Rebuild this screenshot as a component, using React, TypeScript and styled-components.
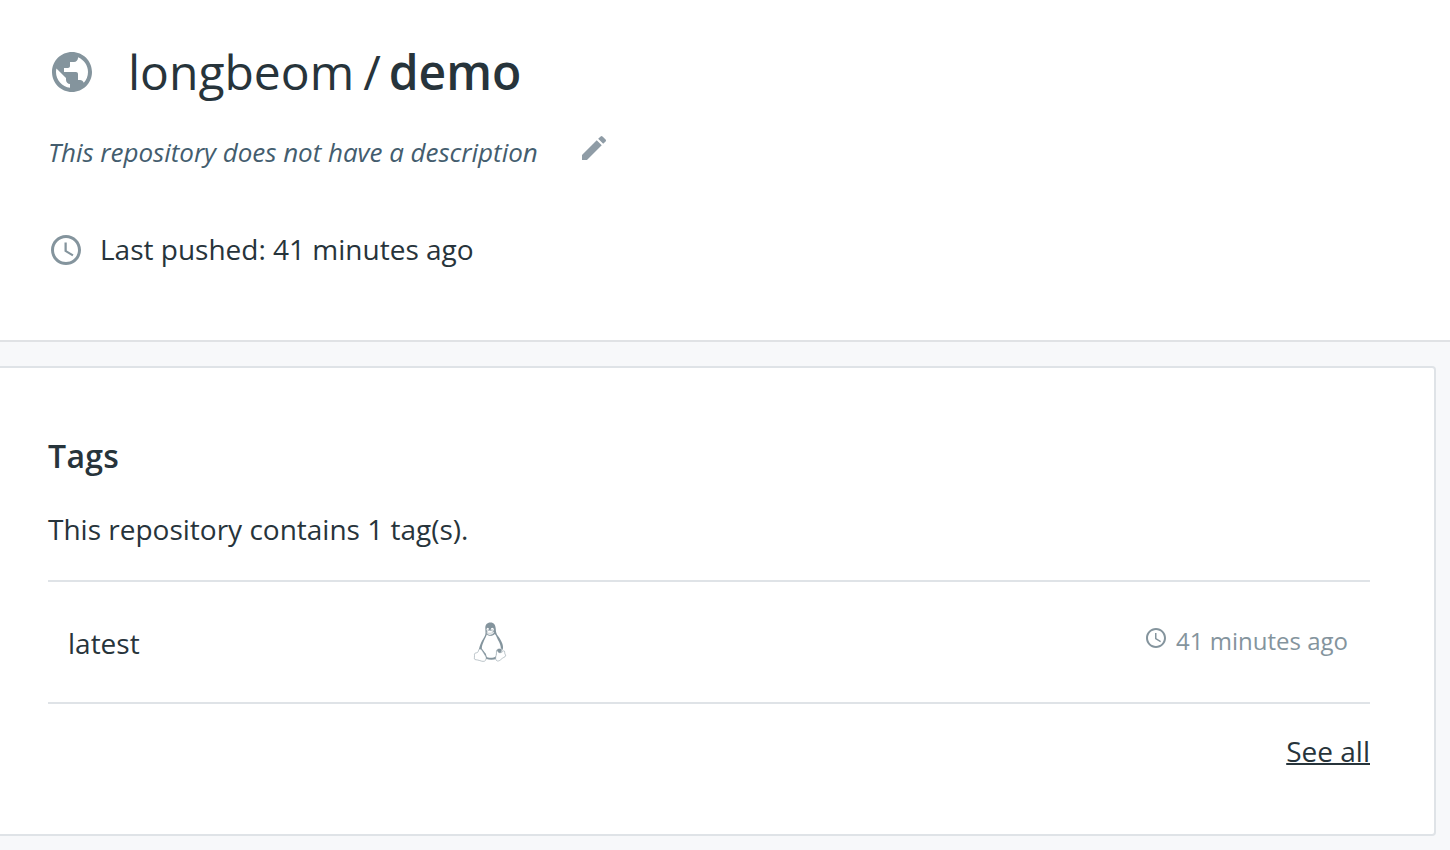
import React from "react";
import styled, { createGlobalStyle } from "styled-components";
import { MdPublic, MdEdit, MdAccessTime } from "react-icons/md";

const Global = createGlobalStyle`
  *{box-sizing:border-box}
  body{margin:0;background:#f7f8fa;font-family:"Open Sans",sans-serif;color:#27343b;overflow:hidden}
  h1,h2,p{margin:0}
`;
const Page = styled.div`
  height: 850px;
  overflow: hidden;
`;
const Header = styled.header`
  height: 342px;
  padding: 36px 48px 0;
  background: #fff;
  border-bottom: 2px solid #e0e2e5;
`;
const TitleRow = styled.div`
  display: flex;
  align-items: center;
  height: 72px;
  color: #84949d;
`;
const Title = styled.h1`
  margin-left: 32px;
  font-size: 48px;
  font-weight: 400;
  line-height: 72px;
  white-space: pre;
  color: #27343b;

  b { font-weight: 600; }
`;
const Slash = styled.span`
  margin: 0 8px 0 9px;
`;
const DescriptionRow = styled.div`
  display: flex;
  height: 40px;
  margin-top: 24px;
  color: #8f9ca6;
`;
const Description = styled.p`
  width: 490px;
  margin-right: 40px;
  font-size: 26px;
  font-style: italic;
  line-height: 40px;
  letter-spacing: -0.035px;
  white-space: nowrap;
  color: #445d6e;
`;
const Pushed = styled.div`
  display: flex;
  align-items: center;
  height: 40px;
  margin-top: 58px;
  color: #84949d;
`;
const PushedText = styled.span`
  margin: 0 0 2px 16px;
  font-size: 28px;
  line-height: 40px;
  color: #27343b;
`;
const Card = styled.section`
  width: 1436px;
  height: 470px;
  margin-top: 24px;
  padding: 68px 64px 0 48px;
  background: #fff;
  border: 2px solid #dfe3e7;
  border-left: 0;
  border-radius: 0 4px 4px 0;
`;
const Heading = styled.h2`
  font-size: 32px;
  font-weight: 600;
  line-height: 40px;
  letter-spacing: 0.3px;
`;
const Summary = styled.p`
  margin-top: 33px;
  font-size: 28px;
  line-height: 40px;
`;
const TagRow = styled.div`
  display: flex;
  align-items: center;
  height: 124px;
  margin-top: 31px;
  padding: 0 22px 0 20px;
  border: solid #dfe3e7;
  border-width: 2px 0;
  color: #84949d;
`;
const TagLabel = styled.span`
  width: 402px;
  padding-top: 2px;
  font-size: 28px;
  color: #27343b;
`;
const PenguinSvg = styled.svg`
  width: 40px;
  height: 40px;
`;
const Age = styled.span`
  display: flex;
  align-items: flex-start;
  gap: 8px;
  height: 40px;
  margin-left: auto;
  font-size: 24px;
  line-height: 38px;

  svg { margin-top: 4px; }
`;
const Footer = styled.div`
  display: flex;
  justify-content: flex-end;
  margin-top: 27px;
`;
const SeeAll = styled.a`
  font-size: 28px;
  line-height: 40px;
  text-decoration: underline;
  text-decoration-thickness: 2px;
`;

function Penguin() {
  return (
    <PenguinSvg viewBox="0 0 40 40" fill="none">
      {/* head, back and flippers */}
      <path fill="currentColor" d="M20.4.4c-3.4 0-5.2 2.3-5.1 5.6l.2 4.8c.1 2.2-.9 3.8-2.4 6.1-1.8 2.8-2.7 5.3-3.6 8-.8 2.5-.9 4.7.3 5.8L16 36.8c3.2 1.2 7.6 1.2 10.8-.1l5-7.3c1.5-1.7 1.6-4.6.6-7.6-1-3.1-2.6-5.6-4.4-7.9-1.7-2.2-2.1-3.8-2.2-6.7C25.6 3 24.1.4 20.4.4z" />
      {/* belly */}
      <path fill="#fff" d="M16.8 12.4c-.5 2.1-2.1 4.4-3 6.8-.8 2.3-2.2 4.6-2 7.4 1.3 2.5 4.5 4.8 4.6 7.1.1 1 .6 1.5 1.6 1.8 2.8.7 5.9.3 8-1.2l.8-6.5c1-1.4 2.6-1.5 4-1 .2-3.1-1.2-6.3-2.8-8.9-1.2-2-1.6-4.3-3.2-5.9-1.5 1.3-4.4 3.2-8 .4z" />
      {/* face */}
      <ellipse cx="17.8" cy="7.5" rx="1.2" ry="1.7" fill="#fff" />
      <ellipse cx="22.3" cy="7.5" rx="1.5" ry="1.8" fill="#fff" />
      <circle cx="18.1" cy="7.8" r=".5" fill="currentColor" />
      <circle cx="22" cy="7.8" r=".6" fill="currentColor" />
      <path fill="#fff" stroke="currentColor" strokeWidth=".5" d="M16.5 10c1-1.1 2-1.7 3.2-1.7 1.4 0 3 .8 4.3 1.5.5 1-.2 1.9-1.2 2.2-1.2.6-2 1.2-3.2 1.1-1.7-.2-3.6-1.9-3.1-3.1z" />
      <path stroke="currentColor" strokeWidth=".45" d="M16.7 10.3c2.2 1.7 4.6 1 6.8-.1" />
      {/* feet */}
      <path fill="#fff" stroke="currentColor" strokeWidth=".55" strokeLinejoin="round" d="M10 26.8c1.2.1 2.3 2 3.2 3.5l2.4 3.8c1.1 1.7.7 4.2-1 5-2.1.9-4.3-.6-6.9-1.1-1.6-.3-3-.2-3.3-1.1-.3-1 .3-2 .1-3.4-.2-1.1-.1-2.1.9-2.4 1.6-.5 2.2-.4 2.7-1.4.5-1.1.5-2.7 1.9-2.9z" />
      <path fill="#fff" stroke="currentColor" strokeWidth=".55" strokeLinejoin="round" d="M27.1 28.2c.7 1.9 2.1 3 4 2.4 1.2-.4 1.8-1.7 2.7-1.8 1-.1.8 1.6 1 2.6.2 1.3 1.1 1.7.9 2.5-.3 1.1-3 1.7-4.7 3.5-1.5 1.6-3.9 2.4-5 .5-1-1.8.3-4.3.4-6.4.1-1.2-.2-3.1.7-3.3z" />
      <path stroke="#fff" strokeWidth=".6" d="M27.4 27.2c.9-1.3 2.7-1.5 3.8-.6 1.1.8.9 2.2.2 3" />
    </PenguinSvg>
  );
}

export default function App() {
  return (
    <Page>
      <Global />
      <Header>
        <TitleRow>
          <MdPublic size={48} />
          <Title>longbeom<Slash>/</Slash><b>demo</b></Title>
        </TitleRow>
        <DescriptionRow>
          <Description>This repository does not have a description</Description>
          <MdEdit size={32} />
        </DescriptionRow>
        <Pushed>
          <MdAccessTime size={36} />
          <PushedText>Last pushed: 41 minutes ago</PushedText>
        </Pushed>
      </Header>
      <Card>
        <Heading>Tags</Heading>
        <Summary>This repository contains 1 tag(s).</Summary>
        <TagRow>
          <TagLabel>latest</TagLabel>
          <Penguin />
          <Age><MdAccessTime size={24} />41 minutes ago</Age>
        </TagRow>
        <Footer><SeeAll>See all</SeeAll></Footer>
      </Card>
    </Page>
  );
}
